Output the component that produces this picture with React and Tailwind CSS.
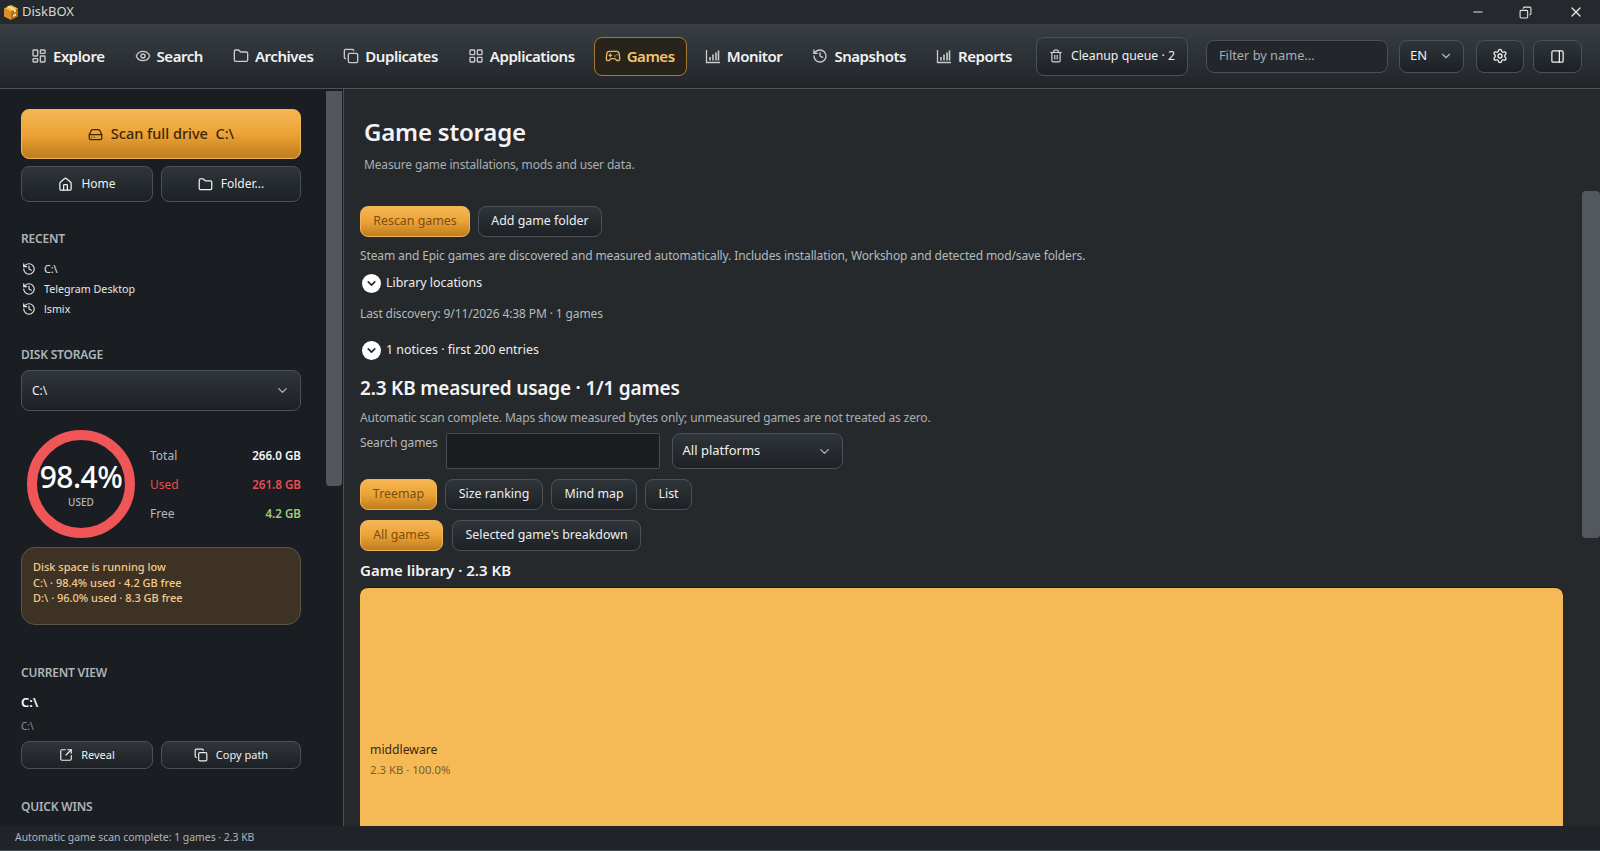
import { LayoutDashboard, Eye, Folder, Copy, LayoutGrid, Gamepad2, History, Trash2, HardDrive, House, SquareArrowOutUpRight, ChevronDown, Settings, PanelRight, Minus, X } from 'lucide-react';

const btn = 'flex shrink-0 items-center justify-center gap-2 rounded-lg border border-[#4b5157] bg-gradient-to-b from-[#2f353a] to-[#1d2125] text-[#eef0f1]';
const amber = 'flex shrink-0 items-center justify-center gap-2 rounded-lg border border-[#f2b45a] bg-gradient-to-b from-[#f6b653] via-[#eca336] to-[#c07d1d]';
const sectionTitle = 'text-xs font-semibold uppercase leading-4 tracking-[-0.2px] text-[#aeb4b9]';

const BarsIcon = () => (
    <svg width="16" height="16" viewBox="0 0 16 16" fill="none" stroke="currentColor" strokeWidth="1.3">
        <path d="M1.5 2v12.5H15" />
        <path d="M5 12.5V9M8 12.5V6.5M11 12.5V4.5M13.5 12.5V2.5" strokeWidth="1.6" />
    </svg>
);

const BoxLogo = () => (
    <svg width="16" height="17" viewBox="0 0 16 17">
        <path d="M1 4.5 8 1l7 3.5L8 8z" fill="#f6b73c" />
        <path d="M1 4.5 8 8v8l-7-3.5z" fill="#e0902a" />
        <path d="M8 8l7-3.5v8L8 16z" fill="#b56d1c" />
        <path d="M4 2.8l7 3.5v2.4l1.8-.9V5.4l-7-3.6z" fill="#fde3a7" />
        <path d="M10 11l3-1.5v2L10 13z" fill="#f8e2b5" />
    </svg>
);

const navItems = [
    { label: 'Explore', icon: <LayoutDashboard size={16} /> },
    { label: 'Search', icon: <Eye size={16} /> },
    { label: 'Archives', icon: <Folder size={16} /> },
    { label: 'Duplicates', icon: <Copy size={16} /> },
    { label: 'Applications', icon: <LayoutGrid size={16} /> },
    { label: 'Games', icon: <Gamepad2 size={16} />, active: true },
    { label: 'Monitor', icon: <BarsIcon /> },
    { label: 'Snapshots', icon: <History size={16} /> },
    { label: 'Reports', icon: <BarsIcon /> },
];

const TitleBar = () => (
    <div className="flex h-6 shrink-0 items-center bg-[#25292d] pl-[3px]">
        <BoxLogo />
        <span className="ml-[3px] text-[13px] text-[#d5d8da]">DiskBOX</span>
        <div className="ml-auto flex items-center text-[#e4e6e8]">
            <Minus size={14} className="mr-[34px]" />
            <Copy size={13} className="mr-[36px] -scale-x-100" />
            <X size={16} className="mr-[16px]" />
        </div>
    </div>
);

const NavBar = () => (
    <div className="flex h-[65px] shrink-0 items-center border-b border-[#4e5359] bg-gradient-to-b from-[#393f44] to-[#212529] pl-5">
        <div className="flex items-center gap-[7px]">
            {navItems.map((n) => (
                <div
                    key={n.label}
                    className={
                        n.active
                            ? 'flex h-[39px] items-center gap-[6px] rounded-lg border border-[#a27a36] bg-[#28241b] pl-[10px] pr-[11px] text-[#f6c46d]'
                            : 'flex h-[39px] items-center gap-[6px] rounded-lg border border-transparent pl-[10px] pr-[11px] text-[#f1f2f3]'
                    }
                >
                    <span className={n.active ? 'text-[#e8b765]' : 'text-[#c9cccf]'}>{n.icon}</span>
                    <span className="text-[15px] font-semibold tracking-[-0.45px]">{n.label}</span>
                </div>
            ))}
        </div>
        <div className={btn + ' ml-3 h-[39px] w-[152px] text-[12.3px]'}>
            <Trash2 size={14} className="text-[#d4d7d9]" />
            Cleanup queue · 2
        </div>
        <div className="ml-[18px] flex h-[33px] w-[182px] shrink-0 items-center rounded-lg border border-[#4b5157] bg-[#23272b] pl-3 text-[12.8px] text-[#a8adb1]">
            Filter by name...
        </div>
        <div className={btn + ' ml-[11px] h-[33px] w-[65px] !justify-between rounded-lg px-[10px] text-[13px]'}>
            EN
            <ChevronDown size={14} className="text-[#b6babd]" />
        </div>
        <div className={btn + ' ml-3 h-[33px] w-[48px]'}>
            <Settings size={16} />
        </div>
        <div className={btn + ' ml-[9px] h-[33px] w-[49px]'}>
            <PanelRight size={15} />
        </div>
    </div>
);

const Sidebar = () => (
    <div className="relative w-[344px] shrink-0 overflow-hidden border-r border-[#4a4f55] bg-[#1a1e22] pl-[21px] pr-[42px] pt-5">
        <div className={amber + ' h-[50px] text-[14.5px] font-medium text-[#3a2809]'}>
            <HardDrive size={15} />
            <span>Scan full drive&nbsp; C:\</span>
        </div>
        <div className="mt-[7px] flex gap-2">
            <div className={btn + ' h-9 w-[132px] text-xs'}>
                <House size={15} /> Home
            </div>
            <div className={btn + ' h-9 flex-1 text-xs'}>
                <Folder size={15} /> Folder...
            </div>
        </div>

        <div className={sectionTitle + ' mt-[29px]'}>Recent</div>
        <div className="mt-[12px] flex flex-col text-[10.7px] leading-5 text-[#e4e6e8]">
            {['C:\\', 'Telegram Desktop', 'lsmix'].map((r) => (
                <div key={r} className="flex items-center gap-2 pl-[1px]">
                    <History size={14} />
                    {r}
                </div>
            ))}
        </div>

        <div className={sectionTitle + ' mt-[28px]'}>Disk storage</div>
        <div className={btn + ' mt-[7px] h-[41px] !justify-between px-[10px] text-xs'}>
            C:\
            <ChevronDown size={15} className="text-[#b6babd]" />
        </div>

        <div className="mt-[19px] flex items-center">
            <div className="ml-[6px] flex h-[108px] w-[108px] shrink-0 flex-col items-center justify-center rounded-full border-[10px] border-[#f05558]">
                <span className="text-[30px] font-medium leading-8 tracking-[-0.5px] text-white">98.4%</span>
                <span className="mt-[3px] text-[10px] font-medium leading-3 text-[#b3b8bc]">USED</span>
            </div>
            <div className="ml-[15px] flex flex-1 flex-col text-xs leading-[29px]">
                <div className="flex justify-between text-[#b4b9bd]">
                    Total <span className="text-[11.6px] font-semibold text-[#f2f3f4]">266.0 GB</span>
                </div>
                <div className="flex justify-between text-[#ea4b50]">
                    Used <span className="text-[11.6px] font-semibold">261.8 GB</span>
                </div>
                <div className="flex justify-between text-[#b4b9bd]">
                    Free <span className="text-[11.6px] font-semibold text-[#9ccb7c]">4.2 GB</span>
                </div>
            </div>
        </div>

        <div className="mt-[9px] h-[78px] rounded-[14px] border border-[#5d5547] bg-[#3e3225] px-[11px] pt-[11px] text-[11px] font-medium leading-[15.5px] text-[#f6cb8a]">
            <div>Disk space is running low</div>
            <div>C:\ · 98.4% used · 4.2 GB free</div>
            <div>D:\ · 96.0% used · 8.3 GB free</div>
        </div>

        <div className={sectionTitle + ' mt-[40px]'}>Current view</div>
        <div className="mt-[11px] text-[13px] font-semibold leading-5 text-white">C:\</div>
        <div className="mt-[6px] text-[10px] leading-4 text-[#8f9499]">C:\</div>
        <div className="mt-[7px] flex gap-2">
            <div className={btn + ' h-[28px] w-[132px] text-[11px]'}>
                <SquareArrowOutUpRight size={14} /> Reveal
            </div>
            <div className={btn + ' h-[28px] flex-1 text-[11px]'}>
                <Copy size={14} /> Copy path
            </div>
        </div>
        <div className={sectionTitle + ' mt-[30px]'}>Quick wins</div>

        <div className="absolute right-[1px] top-[2px] h-[395px] w-4 rounded-b bg-[#51575d]" />
    </div>
);

const Chip = ({ children, on, className = '' }) => (
    <div className={(on ? amber + ' text-[#7b4e12]' : btn) + ' text-[12.4px] ' + className}>{children}</div>
);

const Disclosure = ({ children }) => (
    <div className="flex items-center gap-[5px] pl-[2px] text-[12.4px] leading-5 text-[#eceeef]">
        <div className="flex h-[19px] w-[19px] items-center justify-center rounded-full bg-white text-[#23272a]">
            <ChevronDown size={13} strokeWidth={3} />
        </div>
        {children}
    </div>
);

const Main = () => (
    <div className="relative flex-1 overflow-hidden bg-[#26292c] pl-4 pr-[37px]">
        <h1 className="mt-[27px] pl-[4px] text-[24px] font-semibold leading-8 tracking-[-0.2px] text-[#f3f4f5]">Game storage</h1>
        <p className="mt-[7px] pl-[4px] text-xs leading-5 tracking-[-0.15px] text-[#a9aeb2]">Measure game installations, mods and user data.</p>

        <div className="mt-[31px] flex gap-2">
            <Chip on className="h-[31px] w-[110px]">Rescan games</Chip>
            <Chip className="h-[31px] w-[124px]">Add game folder</Chip>
        </div>
        <p className="mt-[9px] text-xs leading-5 tracking-[-0.12px] text-[#b4b9bc]">
            Steam and Epic games are discovered and measured automatically. Includes installation, Workshop and detected mod/save folders.
        </p>
        <div className="mt-[7px]">
            <Disclosure>Library locations</Disclosure>
        </div>
        <p className="mt-[11px] text-xs leading-5 tracking-[-0.12px] text-[#b4b9bc]">Last discovery: 9/11/2026 4:38 PM · 1 games</p>
        <div className="mt-[16px]">
            <Disclosure>1 notices · first 200 entries</Disclosure>
        </div>

        <h2 className="mt-[15px] text-[19px] font-semibold leading-[26px] tracking-[-0.2px] text-[#f3f4f5]">2.3 KB measured usage · 1/1 games</h2>
        <p className="mt-[7px] text-xs leading-5 tracking-[-0.15px] text-[#a9aeb2]">
            Automatic scan complete. Maps show measured bytes only; unmeasured games are not treated as zero.
        </p>

        <div className="mt-[5px] flex">
            <span className="pt-[1px] text-xs leading-[18px] tracking-[-0.12px] text-[#b4b9bc]">Search games</span>
            <div className="ml-2 h-9 w-[214px] rounded-[2px] border border-[#474c51] bg-[#1b1e21]" />
            <div className={btn + ' ml-[12px] h-9 w-[171px] !justify-between px-[10px] text-[13px]'}>
                All platforms
                <ChevronDown size={15} className="text-[#b6babd]" />
            </div>
        </div>

        <div className="mt-[10px] flex gap-2">
            <Chip on className="h-[31px] w-[77px]">Treemap</Chip>
            <Chip className="h-[31px] w-[98px]">Size ranking</Chip>
            <Chip className="h-[31px] w-[86px]">Mind map</Chip>
            <Chip className="h-[31px] w-[47px]">List</Chip>
        </div>
        <div className="mt-[10px] flex gap-[9px]">
            <Chip on className="h-[31px] w-[83px]">All games</Chip>
            <Chip className="h-[31px] w-[189px]">Selected game's breakdown</Chip>
        </div>

        <h3 className="mt-[9px] text-[15px] font-semibold leading-5 text-[#f3f4f5]">Game library · 2.3 KB</h3>

        <div className="mt-[7px] flex h-[300px] flex-col justify-start rounded-t-lg border-t border-[#14171a] bg-[#f5b955] pl-[10px] pt-[152px]">
            <span className="text-[12.2px] leading-5 text-[#3b2a10]">middleware</span>
            <span className="text-[11.3px] leading-5 text-[#7c5c2a]">2.3 KB · 100.0%</span>
        </div>

        <div className="absolute right-0 top-[102px] h-[347px] w-[18px] rounded bg-[#52585e]" />
    </div>
);

export default function App() {
    return (
        <div className="flex h-[851px] w-full flex-col overflow-hidden bg-[#202428] font-['Noto_Sans',sans-serif]">
            <TitleBar />
            <NavBar />
            <div className="flex min-h-0 flex-1">
                <Sidebar />
                <Main />
            </div>
            <div className="flex h-[25px] shrink-0 items-center border-b border-[#474c51] bg-[#202428] pl-[15px] text-[10.4px] text-[#b0b5b9]">
                Automatic game scan complete: 1 games · 2.3 KB
            </div>
        </div>
    );
}
